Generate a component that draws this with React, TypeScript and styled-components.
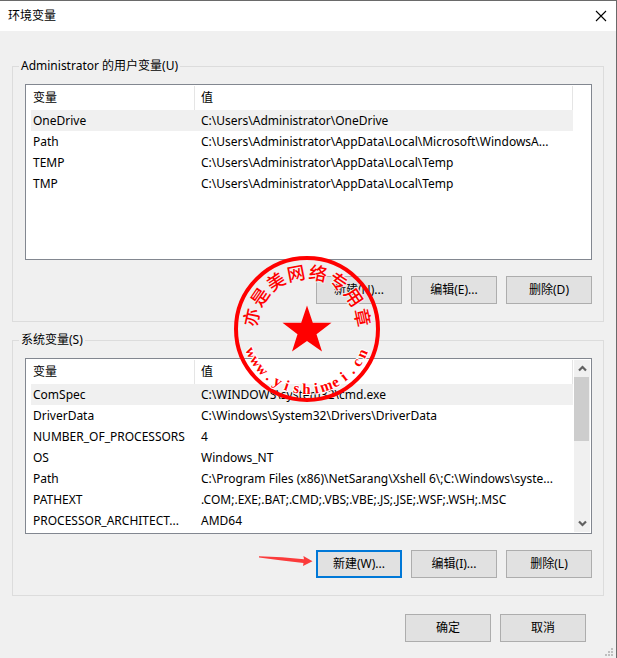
import React from "react";
import styled, { createGlobalStyle } from "styled-components";

const GlobalStyle = createGlobalStyle`
  * { box-sizing: border-box; }
  body {
    margin: 0;
    background: #f0f0f0;
    color: #000;
    font: 12px/18px "Noto Sans", "Noto Sans CJK SC", sans-serif;
  }
  button { font: inherit; color: inherit; padding: 0; }
`;

const Dialog = styled.main`
  position: relative;
  display: flex;
  flex-direction: column;
  min-height: 100vh;
  background: #f0f0f0;
  border-top: 1px solid #6a6a6a;
  border-right: 1px solid #6a6a6a;
`;

const TitleBar = styled.header`
  display: flex;
  align-items: center;
  justify-content: space-between;
  height: 30px;
  padding: 0 9px 0 8px;
  background: #fff;
`;

const Title = styled.h1`
  margin: 0;
  font-size: 12px;
  font-weight: 400;
`;

const CloseButton = styled.button`
  display: flex;
  border: 0;
  background: none;
`;

const Content = styled.div`
  display: flex;
  flex-direction: column;
  gap: 9px;
  padding: 26px 12px 0;
`;

const Group = styled.fieldset`
  min-width: 0;
  margin: 0;
  padding: 9px 11px 17px 12px;
  border: 1px solid #dcdcdc;
`;

const GroupLabel = styled.legend`
  margin-left: -6px;
  padding: 0 2px;
  height: 18px;
`;

const ListBox = styled.div`
  display: grid;
  grid-template-columns: minmax(0, 1fr) 16px;
  gap: 1px;
  height: 176px;
  padding: 0 1px 0 5px;
  border: 1px solid #828790;
  background: #fff;
  overflow: hidden;
`;

const VarTable = styled.table`
  width: 100%;
  align-self: start;
  table-layout: fixed;
  border-collapse: separate;
  border-spacing: 0;
  text-align: left;
`;

const HeadCell = styled.th<{ $name?: boolean }>`
  width: ${(p) => (p.$name ? "164px" : "auto")};
  height: 25px;
  padding: 0 0 0 ${(p) => (p.$name ? "2px" : "6px")};
  font-weight: 400;
  background: linear-gradient(#e5e5e5, #e5e5e5) right 1px / 1px 24px no-repeat;
`;

const Row = styled.tr<{ $current: boolean }>`
  background: ${(p) => (p.$current ? "#f0f0f0" : "#fff")};
`;

const Cell = styled.td<{ $name?: boolean }>`
  height: 21px;
  padding: 0 0 0 ${(p) => (p.$name ? "2px" : "6px")};
  white-space: nowrap;
  overflow: hidden;
`;

const ScrollBar = styled.div`
  display: flex;
  flex-direction: column;
  margin: 1px 0;
  background: #f0f0f0;
`;

const ScrollButton = styled.button`
  display: flex;
  align-items: center;
  justify-content: center;
  height: 17px;
  border: 0;
  background: none;
`;

const ScrollTrack = styled.div`
  flex: 1;
`;

const ScrollThumb = styled.div`
  width: 15px;
  height: 64px;
  background: #cdcdcd;
`;

const Actions = styled.div`
  display: flex;
  justify-content: flex-end;
  gap: 9px;
  margin-top: 16px;
`;

const Footer = styled.footer`
  display: flex;
  justify-content: flex-end;
  gap: 9px;
  padding: 18px 30px 16px;
`;

const PushButton = styled.button<{ $primary?: boolean }>`
  width: 86px;
  height: 28px;
  border: ${(p) => (p.$primary ? "2px solid #0078d7" : "1px solid #adadad")};
  background: #e1e1e1;
`;

const Pointed = styled.div`
  position: relative;
`;

const Arrow = styled.svg`
  position: absolute;
  right: 100%;
  top: 0;
  margin-right: 3px;
`;

const Seal = styled.svg`
  position: absolute;
  top: 254px;
  left: 50%;
  margin-left: -75px;
  pointer-events: none;
`;

const SizeGrip = styled.svg`
  position: absolute;
  right: 3px;
  bottom: 2px;
`;

type Entry = [string, string];

const userVars: Entry[] = [
  ["OneDrive", "C:\\Users\\Administrator\\OneDrive"],
  ["Path", "C:\\Users\\Administrator\\AppData\\Local\\Microsoft\\WindowsA..."],
  ["TEMP", "C:\\Users\\Administrator\\AppData\\Local\\Temp"],
  ["TMP", "C:\\Users\\Administrator\\AppData\\Local\\Temp"],
];

const systemVars: Entry[] = [
  ["ComSpec", "C:\\WINDOWS\\system32\\cmd.exe"],
  ["DriverData", "C:\\Windows\\System32\\Drivers\\DriverData"],
  ["NUMBER_OF_PROCESSORS", "4"],
  ["OS", "Windows_NT"],
  ["Path", "C:\\Program Files (x86)\\NetSarang\\Xshell 6\\;C:\\Windows\\syste..."],
  ["PATHEXT", ".COM;.EXE;.BAT;.CMD;.VBS;.VBE;.JS;.JSE;.WSF;.WSH;.MSC"],
  ["PROCESSOR_ARCHITECT...", "AMD64"],
];

function Chevron({ down = false }: { down?: boolean }) {
  return (
    <svg width="9" height="7" viewBox="0 0 9 7" aria-hidden="true">
      <path
        d={down ? "M1 1.5 4.5 5 8 1.5" : "M1 5.5 4.5 2 8 5.5"}
        fill="none"
        stroke="#606060"
        strokeWidth="2.2"
      />
    </svg>
  );
}

function VariableList({ entries, scroll = false }: { entries: Entry[]; scroll?: boolean }) {
  return (
    <ListBox>
      <VarTable>
        <thead>
          <tr>
            <HeadCell $name scope="col">变量</HeadCell>
            <HeadCell scope="col">值</HeadCell>
          </tr>
        </thead>
        <tbody>
          {entries.map(([name, value], i) => (
            <Row key={name} $current={i === 0}>
              <Cell $name>{name}</Cell>
              <Cell>{value}</Cell>
            </Row>
          ))}
        </tbody>
      </VarTable>
      {scroll && (
        <ScrollBar>
          <ScrollButton type="button" aria-label="向上滚动"><Chevron /></ScrollButton>
          <ScrollTrack><ScrollThumb /></ScrollTrack>
          <ScrollButton type="button" aria-label="向下滚动"><Chevron down /></ScrollButton>
        </ScrollBar>
      )}
    </ListBox>
  );
}

const arcTop = Array.from("亦是美网络专用章");
const arcBottom = Array.from("www.yishimei.cn");

function CompanySeal() {
  return (
    <Seal width="148" height="148" viewBox="-74 -74 148 148" fill="#f00">
      <circle r="71" fill="none" stroke="#f00" strokeWidth="4" />
      <path d="M0-23.5 5.8-6.2 24.5-6.2 9.5 5.2 15 22.5 0 12 -15 22.5 -9.5 5.2 -24.5-6.2 -5.8-6.2Z" />
      <g
        fontFamily='"Noto Sans CJK SC", sans-serif'
        fontSize="18"
        fontWeight="500"
        textAnchor="middle"
        stroke="#f0f0f0"
        strokeWidth="2"
        paintOrder="stroke"
      >
        {arcTop.map((ch, i) => (
          <text key={i} y="-50" transform={`rotate(${-78 + i * 22.3})`}>{ch}</text>
        ))}
      </g>
      <g
        fontFamily='"Liberation Serif", serif'
        fontSize="15"
        fontWeight="700"
        textAnchor="middle"
        stroke="#fff"
        strokeWidth="2"
        paintOrder="stroke"
      >
        {arcBottom.map((ch, i) => (
          <text key={i} y="65" transform={`rotate(${67 - i * 9.5})`}>{ch}</text>
        ))}
      </g>
    </Seal>
  );
}

export default function App() {
  return (
    <>
      <GlobalStyle />
      <Dialog>
        <TitleBar>
          <Title>环境变量</Title>
          <CloseButton type="button" aria-label="关闭">
            <svg width="12" height="12" viewBox="0 0 12 12" aria-hidden="true">
              <path d="M1 1 11 11M11 1 1 11" stroke="#000" strokeWidth="1.1" />
            </svg>
          </CloseButton>
        </TitleBar>
        <Content>
          <Group>
            <GroupLabel>Administrator 的用户变量(U)</GroupLabel>
            <VariableList entries={userVars} />
            <Actions>
              <PushButton type="button">新建(N)...</PushButton>
              <PushButton type="button">编辑(E)...</PushButton>
              <PushButton type="button">删除(D)</PushButton>
            </Actions>
          </Group>
          <Group>
            <GroupLabel>系统变量(S)</GroupLabel>
            <VariableList entries={systemVars} scroll />
            <Actions>
              <Pointed>
                <Arrow width="56" height="20" viewBox="0 0 56 20" aria-hidden="true">
                  <path
                    d="M2 6.2 25 7.2 47 9.3 46.4 6 55.5 11.3 46 16 46.5 12.9 25 10.6 2 7.4Z"
                    fill="#fb3b3b"
                  />
                </Arrow>
                <PushButton type="button" $primary>新建(W)...</PushButton>
              </Pointed>
              <PushButton type="button">编辑(I)...</PushButton>
              <PushButton type="button">删除(L)</PushButton>
            </Actions>
          </Group>
        </Content>
        <Footer>
          <PushButton type="button">确定</PushButton>
          <PushButton type="button">取消</PushButton>
        </Footer>
        <CompanySeal />
        <SizeGrip width="8" height="8" viewBox="0 0 8 8" fill="#bfbfbf" aria-hidden="true">
          <path d="M6 0h2v2H6zM3 3h2v2H3zM6 3h2v2H6zM0 6h2v2H0zM3 6h2v2H3zM6 6h2v2H6z" />
        </SizeGrip>
      </Dialog>
    </>
  );
}
